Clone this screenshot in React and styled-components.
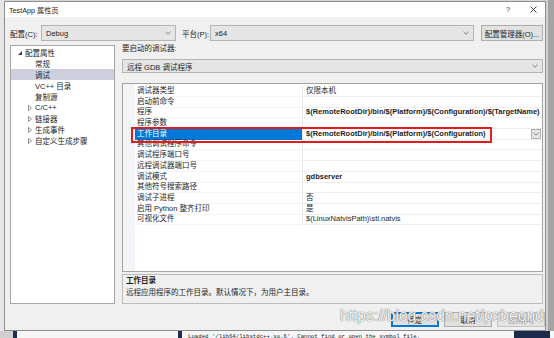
import React from 'react';
import styled, { createGlobalStyle } from 'styled-components';

const GlobalStyle = createGlobalStyle`
  * {
    box-sizing: border-box;
  }

  body {
    margin: 0;
    background: #d6d6d6;
    font-family: 'Liberation Sans', 'Noto Sans CJK SC', sans-serif;
    font-size: 7.5px;
    color: #1e1e1e;
  }
`;

const Screen = styled.div`
  display: grid;
  grid-template-columns: 4px 542px 8px;
  grid-template-rows: 331px 7px;
  width: 554px;
  height: 338px;
  overflow: hidden;
  background: #d6d6d6;
`;

const LeftEdge = styled.div`
  background: #e6e6e6;
`;

const RightEdge = styled.div`
  background: #a4a4a4;
  border-left: 2px solid #d2d2d2;
`;

const LogStrip = styled.div`
  grid-column: 1 / -1;
  display: flex;
  align-items: flex-start;
  background: #f6f6f6;
  overflow: hidden;
`;

const LogMark = styled.div`
  flex: none;
  width: ${(props) => props.$w}px;
  height: 7px;
  margin-left: ${(props) => props.$offset || 0}px;
  background: ${(props) => props.$color};
`;

const LogText = styled.div`
  flex: none;
  margin-left: ${(props) => props.$offset}px;
  width: ${(props) => props.$w}px;
  font-family: 'Liberation Mono', monospace;
  font-size: 5.7px;
  line-height: 7px;
  padding-top: 2px;
  color: #222;
  white-space: nowrap;
  overflow: hidden;
`;

const Dialog = styled.div`
  position: relative;
  display: flex;
  flex-direction: column;
  margin-top: 1px;
  height: 330px;
  background: #f0f0f0;
  border: 1px solid #8e8e8e;
`;

const TitleBar = styled.header`
  display: flex;
  align-items: center;
  height: 15px;
  padding: 0 7px 0 4px;
  background: #ffffff;
`;

const Title = styled.span`
  flex: 1;
  font-size: 7.2px;
  color: #222;
`;

const TitleButton = styled.span`
  display: flex;
  align-items: center;
  justify-content: center;
  width: 10px;
  margin-left: ${(props) => props.$gap}px;
  font-size: 7.5px;
  color: #333;
`;

const Body = styled.div`
  display: flex;
  flex-direction: column;
  flex: 1;
  padding: 8px 2px 3px 5px;
`;

const ConfigRow = styled.div`
  display: flex;
  align-items: center;
  height: 16px;
`;

const FieldLabel = styled.label`
  flex: none;
  width: ${(props) => props.$w}px;
  margin-left: ${(props) => props.$offset || 0}px;
  white-space: nowrap;
`;

const Combo = styled.div`
  display: flex;
  align-items: center;
  flex: none;
  width: ${(props) => (props.$w ? `${props.$w}px` : 'auto')};
  height: ${(props) => props.$h}px;
  padding: 0 4px 0 4px;
  background: #e5e5e5;
  border: 1px solid #b4b4b4;
  white-space: nowrap;
`;

const ComboText = styled.span`
  flex: 1;
`;

const PushButton = styled.button`
  flex: none;
  width: ${(props) => props.$w}px;
  height: 16px;
  margin-left: ${(props) => props.$offset || 0}px;
  padding: 0;
  font: inherit;
  color: #1e1e1e;
  background: #e1e1e1;
  border: 1px solid #adadad;
  white-space: nowrap;
`;

const Main = styled.div`
  display: flex;
  gap: 7px;
  height: 259px;
  margin-top: 4px;
`;

const Tree = styled.nav`
  flex: none;
  width: 105px;
  padding-top: 1px;
  background: #ffffff;
  border: 1px solid #a6a6a6;
`;

const TreeRow = styled.div`
  display: flex;
  align-items: center;
  height: 11px;
  padding-left: ${(props) => props.$indent}px;
  background: ${(props) => (props.$selected ? '#cdd0dc' : 'transparent')};
  white-space: nowrap;
`;

const IconSlot = styled.span`
  display: flex;
  align-items: center;
  flex: none;
  width: 7px;
`;

const RightPanel = styled.section`
  display: flex;
  flex-direction: column;
  flex: 1;
  min-width: 0;
`;

const SectionLabel = styled.div`
  height: 10px;
  line-height: 7px;
  margin-bottom: 4px;
`;

const Grid = styled.div`
  position: relative;
  height: 189px;
  margin: 10px 0 2px;
  padding-top: 2px;
  border: 1px solid #a3a3a3;
  background: linear-gradient(to right, #f3f4f8 12px, #ffffff 12px);
  overflow: hidden;
`;

const GridRow = styled.div`
  display: grid;
  grid-template-columns: 12px 167px 1fr;
  height: 10.69px;
  line-height: 10px;
`;

const NameCell = styled.div`
  padding-left: 2px;
  border-bottom: 1px solid ${(props) => (props.$selected ? '#0078d7' : '#f4f4f4')};
  background: ${(props) => (props.$selected ? '#0078d7' : 'transparent')};
  color: ${(props) => (props.$selected ? '#ffffff' : '#1e1e1e')};
  white-space: nowrap;
`;

const ValueCell = styled.div`
  display: flex;
  align-items: center;
  padding-left: 3px;
  border-left: 1px solid #e9e9e9;
  border-bottom: 1px solid #efefef;
  font-weight: ${(props) => (props.$bold ? 700 : 400)};
  white-space: nowrap;
  overflow: hidden;
`;

const ValueText = styled.span`
  flex: 1;
  line-height: 10px;
`;

const DropButton = styled.span`
  display: flex;
  align-items: center;
  justify-content: center;
  flex: none;
  width: 10px;
  height: 10px;
  margin-right: 1px;
  background: #e6e6e6;
  border: 1px solid #b0b0b0;
`;

const Highlight = styled.div`
  position: absolute;
  left: 8px;
  top: 43px;
  width: 361px;
  height: 16px;
  border: 2px solid #e41b1b;
  pointer-events: none;
`;

const Description = styled.div`
  flex: 1;
  padding: 1px 3px;
  background: #f0f0f0;
  border: 1px solid #bcbcbc;
`;

const DescTitle = styled.div`
  height: 12px;
  line-height: 10px;
  font-weight: 700;
`;

const DescText = styled.div`
  line-height: 10px;
`;

const Footer = styled.footer`
  display: flex;
  justify-content: flex-end;
  gap: 5px;
  height: 15px;
  margin: 8px -2px 0 0;
`;

const DialogButton = styled.button`
  width: 48px;
  height: 15px;
  padding: 0;
  font: inherit;
  color: ${(props) => (props.$disabled ? '#9a9a9a' : '#1e1e1e')};
  background: ${(props) => (props.$disabled ? '#e4e4e4' : '#e1e1e1')};
  border: 1px solid ${(props) => (props.$primary ? '#0078d7' : props.$disabled ? '#c4c4c4' : '#adadad')};
  box-shadow: ${(props) => (props.$primary ? 'inset 0 0 0 1px #0078d7' : 'none')};
`;

const Watermark = styled.div`
  position: absolute;
  left: 335px;
  top: 305px;
  font-family: 'Liberation Sans', sans-serif;
  font-size: 15.6px;
  line-height: 18px;
  color: rgba(255, 255, 255, 0.92);
  text-shadow: 0 0 1px #777, 0 0 1px #777;
  white-space: nowrap;
  pointer-events: none;
`;

const Chevron = () => (
  <svg width="6" height="4" viewBox="0 0 6 4">
    <path d="M0.5 0.8 L3 3.2 L5.5 0.8" fill="none" stroke="#6a6a6a" strokeWidth="0.8" />
  </svg>
);

const Expanded = () => (
  <svg width="4" height="4" viewBox="0 0 4 4">
    <path d="M4 0 L4 4 L0 4 Z" fill="#3c3c3c" />
  </svg>
);

const Collapsed = () => (
  <svg width="4" height="6" viewBox="0 0 4 6">
    <path d="M0.5 0.5 L3.5 3 L0.5 5.5 Z" fill="none" stroke="#767676" strokeWidth="0.8" />
  </svg>
);

const CloseIcon = () => (
  <svg width="7" height="7" viewBox="0 0 7 7">
    <path d="M0.5 0.5 L6.5 6.5 M6.5 0.5 L0.5 6.5" stroke="#333" strokeWidth="0.9" />
  </svg>
);

const treeItems = [
  { label: '配置属性', level: 0, icon: 'open' },
  { label: '常规', level: 1 },
  { label: '调试', level: 1, selected: true },
  { label: 'VC++ 目录', level: 1 },
  { label: '复制源', level: 1 },
  { label: 'C/C++', level: 1, icon: 'closed' },
  { label: '链接器', level: 1, icon: 'closed' },
  { label: '生成事件', level: 1, icon: 'closed' },
  { label: '自定义生成步骤', level: 1, icon: 'closed' },
];

const properties = [
  { name: '调试器类型', value: '仅限本机' },
  { name: '启动前命令', value: '' },
  { name: '程序', value: '$(RemoteRootDir)/bin/$(Platform)/$(Configuration)/$(TargetName)', bold: true },
  { name: '程序参数', value: '' },
  { name: '工作目录', value: '$(RemoteRootDir)/bin/$(Platform)/$(Configuration)', bold: true, selected: true },
  { name: '其他调试程序命令', value: '' },
  { name: '调试程序端口号', value: '' },
  { name: '远程调试器端口号', value: '' },
  { name: '调试模式', value: 'gdbserver', bold: true },
  { name: '其他符号搜索路径', value: '' },
  { name: '调试子进程', value: '否' },
  { name: '启用 Python 整齐打印', value: '是' },
  { name: '可视化文件', value: '$(LinuxNatvisPath)\\stl.natvis' },
];

export default function App() {
  return (
    <>
      <GlobalStyle />
      <Screen>
        <LeftEdge />
        <Dialog>
          <TitleBar>
            <Title>TestApp 属性页</Title>
            <TitleButton>?</TitleButton>
            <TitleButton $gap={15}>
              <CloseIcon />
            </TitleButton>
          </TitleBar>

          <Body>
            <ConfigRow>
              <FieldLabel $w={31}>配置(C):</FieldLabel>
              <Combo $w={135} $h={16}>
                <ComboText>Debug</ComboText>
                <Chevron />
              </Combo>
              <FieldLabel $w={28} $offset={6}>平台(P):</FieldLabel>
              <Combo $w={264} $h={16}>
                <ComboText>x64</ComboText>
                <Chevron />
              </Combo>
              <PushButton $w={62} $offset={7}>配置管理器(O)...</PushButton>
            </ConfigRow>

            <Main>
              <Tree>
                {treeItems.map((item) => (
                  <TreeRow key={item.label} $indent={item.level === 0 ? 7 : 17} $selected={item.selected}>
                    <IconSlot>
                      {item.icon === 'open' && <Expanded />}
                      {item.icon === 'closed' && <Collapsed />}
                    </IconSlot>
                    {item.label}
                  </TreeRow>
                ))}
              </Tree>

              <RightPanel>
                <SectionLabel>要启动的调试器:</SectionLabel>
                <Combo $h={14}>
                  <ComboText>远程 GDB 调试程序</ComboText>
                  <Chevron />
                </Combo>

                <Grid>
                  {properties.map((prop) => (
                    <GridRow key={prop.name}>
                      <span />
                      <NameCell $selected={prop.selected}>{prop.name}</NameCell>
                      <ValueCell $bold={prop.bold}>
                        <ValueText>{prop.value}</ValueText>
                        {prop.selected && (
                          <DropButton>
                            <Chevron />
                          </DropButton>
                        )}
                      </ValueCell>
                    </GridRow>
                  ))}
                  <Highlight />
                </Grid>

                <Description>
                  <DescTitle>工作目录</DescTitle>
                  <DescText>远程应用程序的工作目录。默认情况下，为用户主目录。</DescText>
                </Description>
              </RightPanel>
            </Main>

            <Footer>
              <DialogButton $primary>确定</DialogButton>
              <DialogButton>取消</DialogButton>
              <DialogButton $disabled>应用(A)</DialogButton>
            </Footer>
          </Body>

          <Watermark>https://blog.csdn.net/psbeond</Watermark>
        </Dialog>
        <RightEdge />

        <LogStrip>
          <LogMark $w={13} $color="#d0d0d0" />
          <LogMark $w={4} $color="#1f2d52" />
          <LogMark $w={4} $offset={161} $color="#1f2d52" />
          <LogText $offset={6} $w={326}>Loaded '/lib64/libstdc++.so.6'. Cannot find or open the symbol file.</LogText>
          <LogMark $w={36} $color="#1c2a4c" />
        </LogStrip>
      </Screen>
    </>
  );
}
